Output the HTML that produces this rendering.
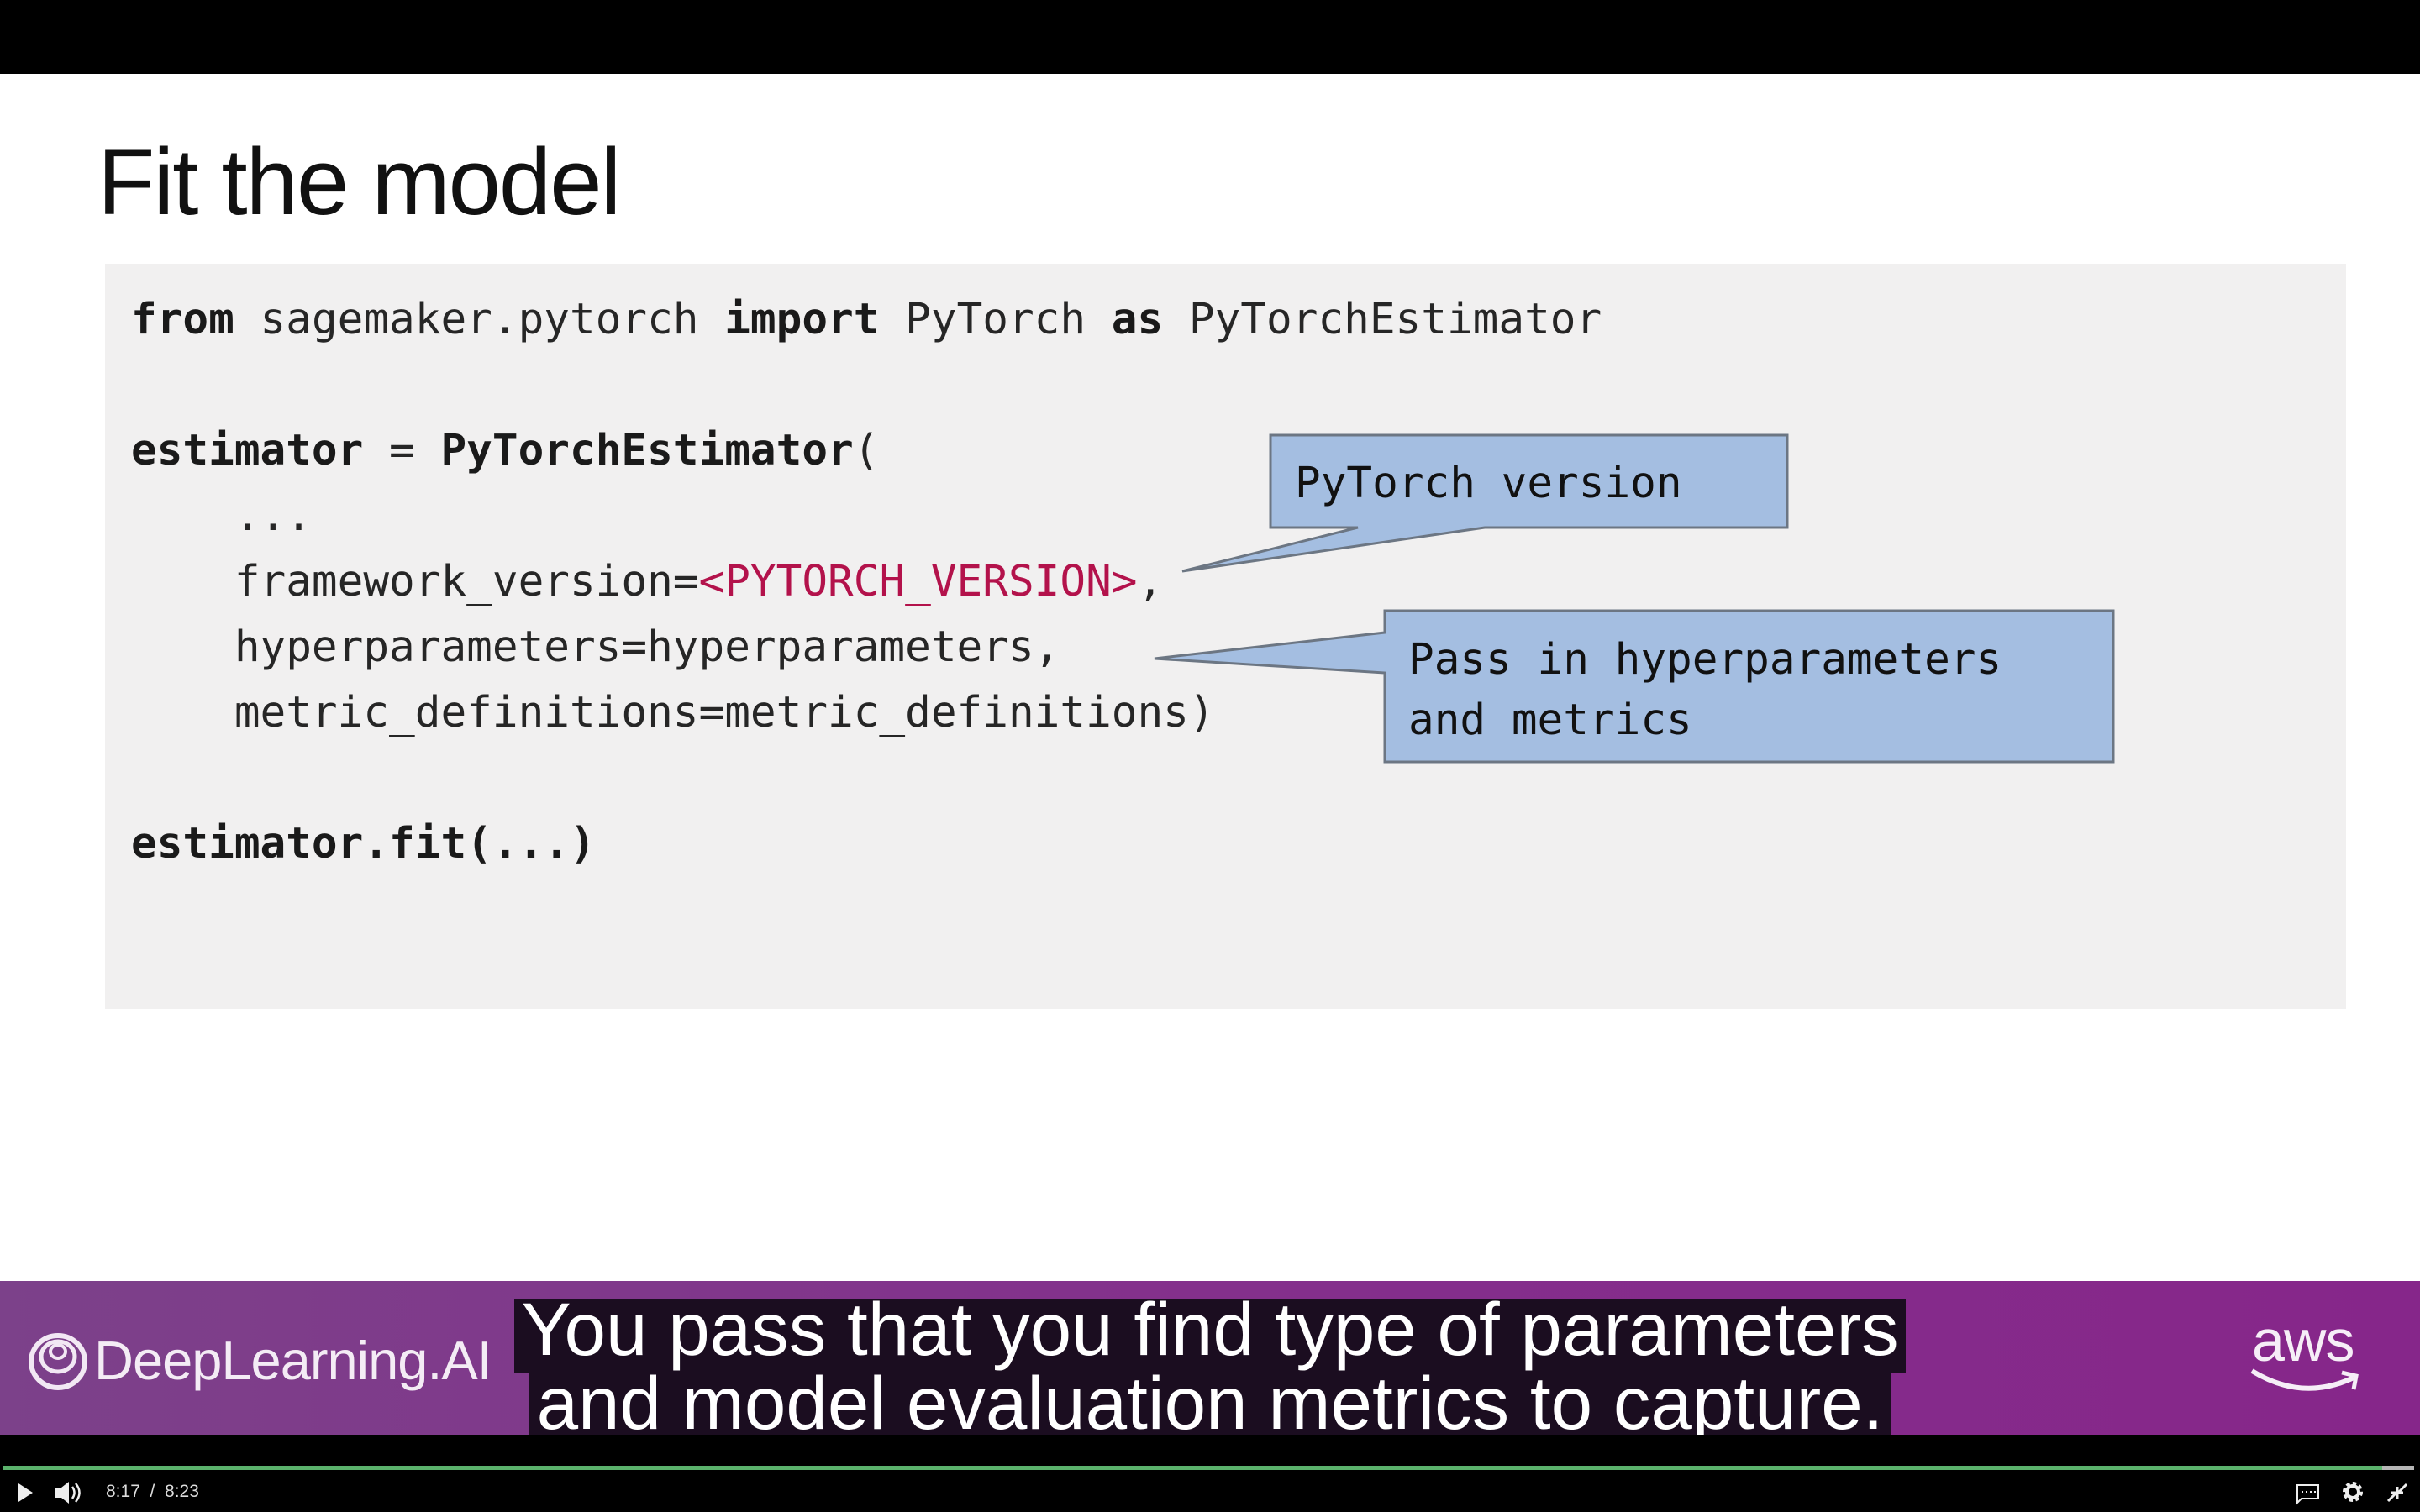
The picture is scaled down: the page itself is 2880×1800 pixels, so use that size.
<!DOCTYPE html>
<html><head><meta charset="utf-8"><style>
*{margin:0;padding:0;box-sizing:border-box}
body{width:2880px;height:1800px;background:#000;position:relative;overflow:hidden;font-family:"Liberation Sans",sans-serif}
.slide{position:absolute;left:0;top:88px;width:2880px;height:1437px;background:#fff}
.title{position:absolute;left:116px;top:161px;font-size:112px;color:#111;letter-spacing:-2px;line-height:1}
.code{position:absolute;left:125px;top:314px;width:2667px;height:887px;background:#f1f0f0}
pre{position:absolute;left:156px;top:342px;font-family:"DejaVu Sans Mono",monospace;font-size:51px;line-height:78px;color:#262626}
pre b{font-weight:bold;color:#1a1a1a}
pre .r{color:#b3124b}
.ct{position:absolute;font-family:"DejaVu Sans Mono",monospace;font-size:51px;color:#111;line-height:72px}
.banner{position:absolute;left:0;top:1525px;width:2880px;height:183px;background:linear-gradient(90deg,#7c418a,#84308c 50%,#86268a)}
.sub{position:absolute;color:#fff;font-size:89px;background:#1b0d20;white-space:nowrap;padding:0 2px}
.time{position:absolute;left:126px;top:1764px;font-size:21px;color:#ddd}
</style></head><body>
<div class="slide"></div>
<div class="title">Fit the model</div>
<div class="code"></div>
<pre><b>from</b> sagemaker.pytorch <b>import</b> PyTorch <b>as</b> PyTorchEstimator

<b>estimator</b> = <b>PyTorchEstimator</b>(
    ...
    framework_version=<span class="r">&lt;PYTORCH_VERSION&gt;</span>,
    hyperparameters=hyperparameters,
    metric_definitions=metric_definitions)

<b>estimator.fit(...)</b></pre>
<svg style="position:absolute;left:0;top:0" width="2880" height="1800">
<polygon points="1512,518 2127,518 2127,628 1767,628 1407,680 1616,628 1512,628" fill="#a4bee1" stroke="#6c7683" stroke-width="3"/>
<polygon points="1648,727 2515,727 2515,907 1648,907 1648,801 1374,784 1648,753" fill="#a4bee1" stroke="#6c7683" stroke-width="3"/>
<rect x="4" y="1745" width="2831" height="5" fill="#5bb26c"/>
<rect x="2835" y="1745" width="38" height="5" fill="#b5b5b5"/>
<polygon points="22,1766 22,1788 39,1777" fill="#eee"/>
<path d="M66,1771 h7 l9,-7 v26 l-9,-7 h-7z" fill="#eee"/>
<path d="M86,1770 q5,7 0,14 M90,1766 q9,11 0,22" stroke="#eee" stroke-width="2.5" fill="none"/>
<path d="M2734,1768 h25 v16 h-20 l-5,5z" fill="none" stroke="#eee" stroke-width="2"/>
<path d="M2739,1776 h2 M2744,1776 h2 M2749,1776 h2 M2754,1776 h2" stroke="#eee" stroke-width="2"/>
<circle cx="2800" cy="1776" r="9" fill="none" stroke="#eee" stroke-width="6" stroke-dasharray="4 3"/>
<circle cx="2800" cy="1776" r="7" fill="none" stroke="#eee" stroke-width="4"/>
<path d="M2842,1787 l10,-10 M2846,1777 h7 v7 M2864,1767 l-10,10 M2853,1770 v7 h7" stroke="#eee" stroke-width="3" fill="none"/>
</svg>
<div class="ct" style="left:1541px;top:540px">PyTorch version</div>
<div class="ct" style="left:1676px;top:750px">Pass in hyperparameters<br>and metrics</div>
<div class="banner"></div>
<svg style="position:absolute;left:30px;top:1583px" width="80" height="75">
<ellipse cx="39" cy="38" rx="32" ry="31" fill="none" stroke="#f2e8f4" stroke-width="6"/>
<ellipse cx="39" cy="32" rx="20" ry="18" fill="none" stroke="#f2e8f4" stroke-width="5"/>
<ellipse cx="39" cy="26" rx="9" ry="8" fill="none" stroke="#f2e8f4" stroke-width="4"/>
</svg>
<div style="position:absolute;left:112px;top:1582px;font-size:65px;color:#f4ecf5;letter-spacing:-1px">DeepLearning.AI</div>
<div style="position:absolute;left:2680px;top:1556px;font-size:70px;color:#f6eef7;letter-spacing:-1px">aws</div>
<svg style="position:absolute;left:2675px;top:1627px" width="140" height="45">
<path d="M5,5 Q65,42 126,13" stroke="#f6eef7" stroke-width="6" fill="none"/>
<path d="M112,7 l17,4 -3,16" stroke="#f6eef7" stroke-width="5" fill="none"/>
</svg>
<div class="sub" style="left:612px;top:1547px;width:1656px;height:88px;line-height:70px;text-align:center">You pass that you find type of parameters</div>
<div class="sub" style="left:630px;top:1635px;width:1620px;height:73px;line-height:70px;text-align:center;overflow:hidden">and model evaluation metrics to capture.</div>
<div class="time">8:17 &nbsp;/ &nbsp;8:23</div>
</body></html>
